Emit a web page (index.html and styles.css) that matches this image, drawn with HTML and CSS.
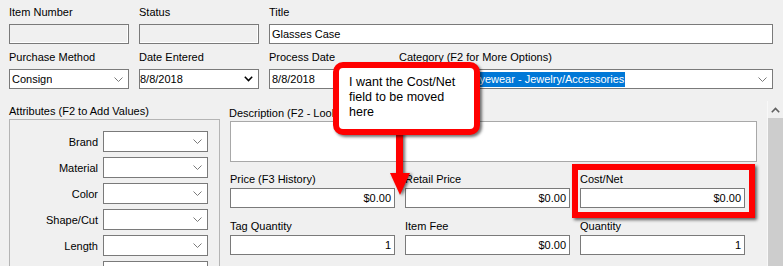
FILE: index.html
```html
<!DOCTYPE html>
<html>
<head>
<meta charset="utf-8">
<link rel="stylesheet" href="styles.css">
</head>
<body>
<div class="top">
  <div class="field"><span class="lbl">Item Number</span><div class="input disabled"></div></div>
  <div class="field"><span class="lbl">Status</span><div class="input disabled"></div></div>
  <div class="field span2"><span class="lbl">Title</span><div class="input text">Glasses Case</div></div>
  <div class="field"><span class="lbl">Purchase Method</span><div class="input select text"><span>Consign</span><svg class="chev" width="9" height="5" viewBox="0 0 9 5"><polyline points="0.5,0.5 4.5,4.5 8.5,0.5"/></svg></div></div>
  <div class="field"><span class="lbl">Date Entered</span><div class="input select date"><span>8/8/2018</span><svg class="chev dark" width="9" height="6" viewBox="0 0 9 6"><polyline points="0.8,0.8 4.5,4.6 8.2,0.8"/></svg></div></div>
  <div class="field"><span class="lbl">Process Date</span><div class="input select text"><span>8/8/2018</span><svg class="chev dark" width="9" height="6" viewBox="0 0 9 6"><polyline points="0.8,0.8 4.5,4.6 8.2,0.8"/></svg></div></div>
  <div class="field"><span class="lbl">Category (F2 for More Options)</span><div class="input select text"><span class="hl">Accessories - Eyewear - Jewelry/Accessories</span><svg class="chev" width="9" height="5" viewBox="0 0 9 5"><polyline points="0.5,0.5 4.5,4.5 8.5,0.5"/></svg></div></div>
</div>

<div class="lower">
  <div class="attrs">
    <span class="lbl">Attributes (F2 to Add Values)</span>
    <div class="groupbox">
      <span class="attr-lbl">Brand</span><div class="input select"><span></span><svg class="chev" width="9" height="5" viewBox="0 0 9 5"><polyline points="0.5,0.5 4.5,4.5 8.5,0.5"/></svg></div>
      <span class="attr-lbl">Material</span><div class="input select"><span></span><svg class="chev" width="9" height="5" viewBox="0 0 9 5"><polyline points="0.5,0.5 4.5,4.5 8.5,0.5"/></svg></div>
      <span class="attr-lbl">Color</span><div class="input select"><span></span><svg class="chev" width="9" height="5" viewBox="0 0 9 5"><polyline points="0.5,0.5 4.5,4.5 8.5,0.5"/></svg></div>
      <span class="attr-lbl">Shape/Cut</span><div class="input select"><span></span><svg class="chev" width="9" height="5" viewBox="0 0 9 5"><polyline points="0.5,0.5 4.5,4.5 8.5,0.5"/></svg></div>
      <span class="attr-lbl">Length</span><div class="input select"><span></span><svg class="chev" width="9" height="5" viewBox="0 0 9 5"><polyline points="0.5,0.5 4.5,4.5 8.5,0.5"/></svg></div>
      <span class="attr-lbl"></span><div class="input select"></div>
    </div>
  </div>

  <div class="panel">
    <div class="panel-content">
      <span class="lbl desc-lbl">Description (F2 - Lookup)</span>
      <div class="desc-box"></div>
      <div class="fields">
        <div class="field"><span class="lbl">Price (F3 History)</span><div class="input num">$0.00</div></div>
        <div class="field"><span class="lbl">Retail Price</span><div class="input num">$0.00</div></div>
        <div class="field"><span class="lbl">Cost/Net</span><div class="input num">$0.00</div></div>
        <div class="field"><span class="lbl">Tag Quantity</span><div class="input num">1</div></div>
        <div class="field"><span class="lbl">Item Fee</span><div class="input num">$0.00</div></div>
        <div class="field"><span class="lbl">Quantity</span><div class="input num">1</div></div>
      </div>
    </div>
    <div class="scrollbar">
      <div class="sb-btn"><svg width="9" height="6" viewBox="0 0 9 6"><polyline points="0.8,5.2 4.5,1.4 8.2,5.2"/></svg></div>
      <div class="sb-thumb"></div>
    </div>
  </div>
</div>

<svg class="arrow" width="26" height="68" viewBox="0 0 26 68"><rect x="8" y="0" width="7" height="41"/><polygon points="2,41 22,41 12,63"/></svg>
<div class="callout">I want the Cost/Net<br>field to be moved<br>here</div>
<div class="redbox"></div>
</body>
</html>
```

FILE: styles.css
```css
* { box-sizing: border-box; }
html, body { margin: 0; padding: 0; }
body {
  width: 783px;
  height: 266px;
  overflow: hidden;
  position: relative;
  background: #f0f0f0;
  font-family: "Liberation Sans", Arial, sans-serif;
  font-size: 11px;
  color: #000;
}
.top {
  display: grid;
  grid-template-columns: 120px 120px 120px 374px;
  column-gap: 10px;
  row-gap: 6px;
  padding: 5px 0 0 9px;
}
.span2 { grid-column: span 2; }
.lbl {
  display: block;
  height: 14px;
  line-height: 14px;
  white-space: nowrap;
}
.top .lbl { margin-bottom: 5px; }
.input {
  height: 20px;
  border: 1px solid #7a7a7a;
  background: #fff;
  display: flex;
  align-items: center;
  padding: 0 2px;
  line-height: 14px;
  white-space: nowrap;
  overflow: hidden;
}
.input.text { padding-left: 2px; }
.input.disabled {
  background: #f0f0f0;
  box-shadow: inset -1px -1px 0 #fff;
}
.select { justify-content: space-between; padding-right: 5px; }
.select > span { overflow: hidden; }
.date { padding-left: 0; }
.chev { flex: none; fill: none; stroke: #7a7a7a; stroke-width: 1; }
.chev.dark { stroke: #000; stroke-width: 1.5; }
.hl {
  background: #0078d7;
  color: #fff;
  line-height: 15px;
  padding: 0 1px;
}
.num { justify-content: flex-end; padding-right: 3px; }

.lower {
  display: flex;
  padding-left: 9px;
  margin-top: 12px;
}
.attrs { width: 211px; flex: none; padding-top: 3px; }
.attrs > .lbl { margin-bottom: 1px; }
.groupbox {
  height: 150px;
  border: 1px solid #b4b4b4;
  padding: 11px 11px 0 0;
  display: grid;
  grid-template-columns: 1fr 105px;
  grid-auto-rows: 21px;
  column-gap: 5px;
  row-gap: 5px;
  align-items: center;
  overflow: hidden;
}
.groupbox .input { height: 21px; }
.attr-lbl { text-align: right; white-space: nowrap; line-height: 14px; }

.panel {
  flex: 1;
  display: flex;
  margin-left: 5px;
  height: 165px;
}
.panel-content { flex: 1; padding: 5px 0 0 5px; }
.desc-lbl { margin-bottom: 1px; margin-left: -1px; }
.desc-box {
  width: 527px;
  height: 41px;
  background: #fff;
  border: 1px solid #a8a8a8;
}
.fields {
  display: grid;
  grid-template-columns: 165px 165px 165px;
  column-gap: 10px;
  row-gap: 11px;
  margin-top: 10px;
}
.fields .lbl { margin-bottom: 2px; }

.scrollbar {
  width: 16px;
  flex: none;
  display: flex;
  flex-direction: column;
  border-left: 1px solid #f8f8f8;
}
.sb-btn {
  height: 17px;
  display: flex;
  align-items: center;
  justify-content: center;
}
.sb-btn svg { fill: none; stroke: #606060; stroke-width: 1.6; }
.sb-thumb { flex: 1; background: #cdcdcd; }

.arrow {
  position: absolute;
  left: 388px;
  top: 132px;
  fill: #ff0000;
  filter: drop-shadow(2px 1px 1.5px rgba(0,0,0,0.55));
}
.callout {
  position: absolute;
  left: 333px;
  top: 62px;
  width: 147px;
  height: 73px;
  background: #fff;
  border: 6px solid #ff0000;
  border-radius: 10px;
  box-shadow: 2px 2px 3px rgba(0,0,0,0.55);
  padding: 7px 0 0 10px;
  font-size: 12.5px;
  line-height: 15px;
  white-space: nowrap;
}
.redbox {
  position: absolute;
  left: 572px;
  top: 164px;
  width: 183px;
  height: 54px;
  border: 6px solid #ff0000;
  box-shadow: 2px 2px 3px rgba(0,0,0,0.6);
}
```
